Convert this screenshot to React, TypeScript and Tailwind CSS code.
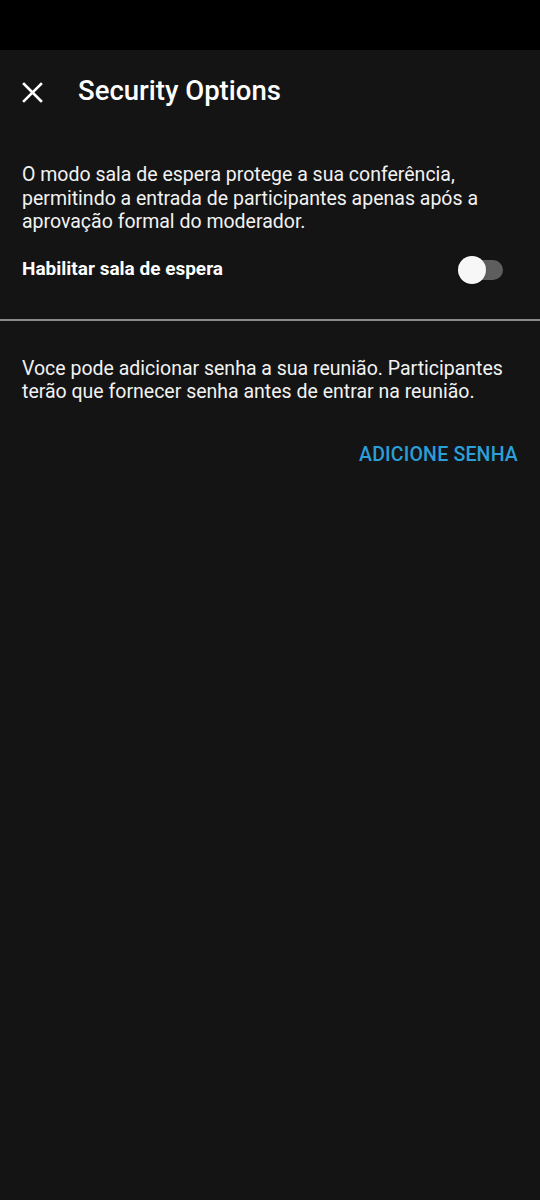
const App = () => {
  return (
    <div className="w-[540px] h-[1200px] bg-[#141414] text-white flex flex-col" style={{ fontFamily: "Roboto, 'Noto Sans', sans-serif" }}>
      <div className="h-[50px] bg-black" />
      <div className="flex items-center h-[82px] pl-[22px] gap-[35px]">
        <svg width="21" height="21" viewBox="0 0 21 21" className="mt-[2px]">
          <path d="M2 2 L19 19 M19 2 L2 19" stroke="white" strokeWidth="2.6" strokeLinecap="square" />
        </svg>
        <h1 className="text-[27.5px] font-medium">Security Options</h1>
      </div>
      <div className="px-[22px] pt-[31px]">
        <p className="text-[19.5px] leading-[23.5px] text-[#f2f2f2]">
          O modo sala de espera protege a sua conferência, permitindo a entrada de participantes apenas após a aprovação formal do moderador.
        </p>
        <div className="flex items-center justify-between h-[48px] mt-[12px] pr-[15px]">
          <span className="text-[19px] font-bold">Habilitar sala de espera</span>
          <div className="relative w-[40px] h-[20px] rounded-full bg-[#5e5e5e]">
            <div className="absolute left-[-5px] top-[-4px] w-[28px] h-[28px] rounded-full bg-[#f7f7f7] shadow" />
          </div>
        </div>
      </div>
      <div className="mt-[25px] h-[2px] bg-[#8a8a8a]" />
      <div className="px-[22px] pt-[36px]">
        <p className="text-[19.5px] leading-[23.5px] text-[#f2f2f2]">
          Voce pode adicionar senha a sua reunião. Participantes terão que fornecer senha antes de entrar na reunião.
        </p>
        <div className="flex justify-end mt-[40px]">
          <button className="text-[19.5px] leading-[22px] font-medium text-[#2a9fd8] tracking-[0.2px]">ADICIONE SENHA</button>
        </div>
      </div>
    </div>
  );
};

export default App;
